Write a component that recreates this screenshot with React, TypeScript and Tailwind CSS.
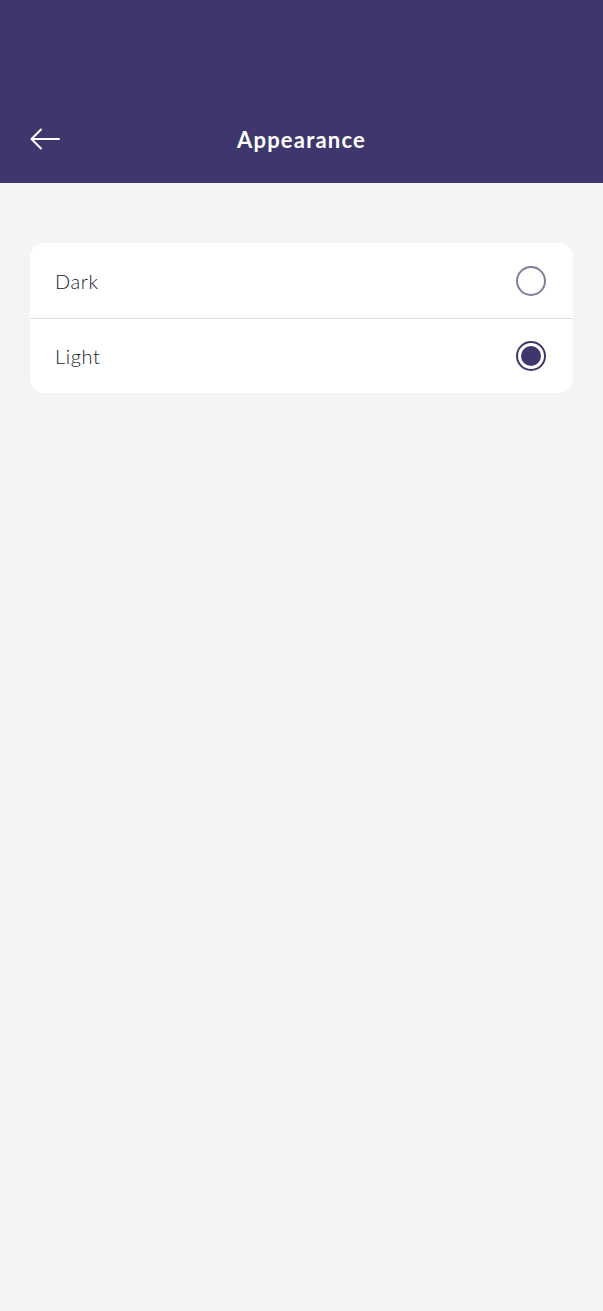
import { useState } from 'react';

const options = ['Dark', 'Light'];

function Radio({ checked }: { checked: boolean }) {
  if (checked) {
    return (
      <span className="flex h-[30px] w-[30px] items-center justify-center rounded-full border-2 border-[#3d376d]">
        <span className="h-[20px] w-[20px] rounded-full bg-[#3d376d]" />
      </span>
    );
  }
  return <span className="block h-[30px] w-[30px] rounded-full border-2 border-[#827d98]" />;
}

export default function App() {
  const [mode, setMode] = useState('Light');

  return (
    <div className="min-h-[1311px] bg-[#f4f4f4] font-['Lato','Noto_Sans',sans-serif]">
      <div className="bg-[#3d376d] pt-[95px]">
        <div className="relative flex h-[88px] items-center justify-center">
          <button className="absolute left-[30px] top-1/2 -translate-y-1/2 text-white">
            <svg width="30" height="22" viewBox="0 0 30 22" fill="none" stroke="currentColor" strokeWidth="2" strokeLinecap="round" strokeLinejoin="round">
              <path d="M29 11H1.5M11 1.5L1.5 11l9.5 9.5" />
            </svg>
          </button>
          <h1 className="text-[22px] font-bold tracking-[1.2px] text-white">Appearance</h1>
        </div>
      </div>

      <div className="mx-[30px] mt-[60px] overflow-hidden rounded-[14px] bg-white">
        {options.map((opt, i) => (
          <button
            key={opt}
            onClick={() => setMode(opt)}
            className={`flex h-[75px] w-full items-center justify-between pl-[25px] pr-[27px] text-left ${i > 0 ? 'border-t border-[#dcdcdc]' : ''}`}
          >
            <span className="text-[20px] font-light tracking-[0.6px] text-[#1c1930]">{opt}</span>
            <Radio checked={mode === opt} />
          </button>
        ))}
      </div>
    </div>
  );
}
